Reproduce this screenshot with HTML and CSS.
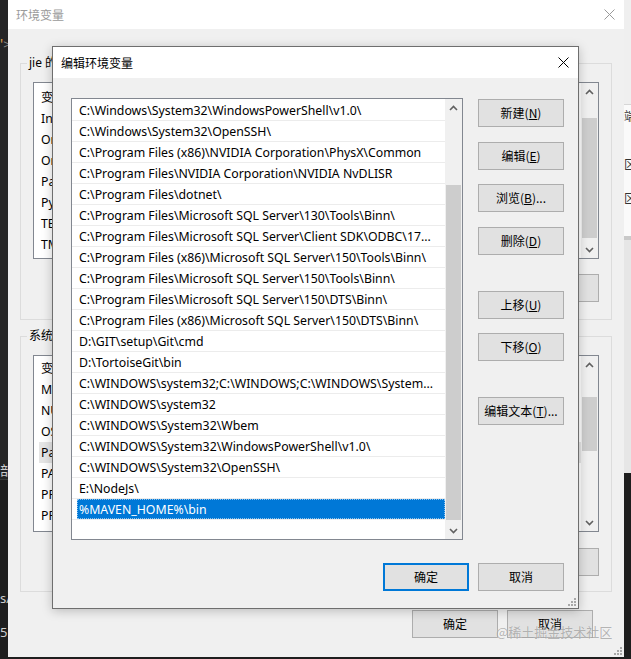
FILE: index.html
```html
<!DOCTYPE html>
<html lang="zh-CN">
<head>
<meta charset="utf-8">
<title>编辑环境变量</title>
<link rel="stylesheet" href="styles.css">
</head>
<body>
<div class="desk">
  <aside class="edge edge-left">
    <div class="el-top"><span class="el-orange">'</span><span class="el-gt">&gt;</span></div>
    <div class="el-mid"></div>
    <div class="el-low"><span class="el-a">部</span><span class="el-b">s/</span><span class="el-c">5p</span></div>
  </aside>

  <section class="win outer">
    <header class="titlebar">
      <span class="title">环境变量</span>
      <span class="close close-inactive"><svg width="11" height="11" viewBox="0 0 11 11"><path d="M0.5 0.5 10.5 10.5 M10.5 0.5 0.5 10.5"/></svg></span>
    </header>
    <div class="outer-body">
      <fieldset class="group group-user">
        <legend>jie 的用户变量(<u>U</u>)</legend>
        <div class="lv">
          <div class="lv-rows lv-rows-user">
            <div class="lv-row">变量</div>
            <div class="lv-row">IntelliJ IDEA</div>
            <div class="lv-row">OneDrive</div>
            <div class="lv-row">OneDriveConsumer</div>
            <div class="lv-row">Path</div>
            <div class="lv-row">PyCharm</div>
            <div class="lv-row">TEMP</div>
            <div class="lv-row">TMP</div>
          </div>
          <div class="sb sb-outer">
            <div class="sb-btn"><svg width="9" height="6" viewBox="0 0 9 6"><path d="M1 5 4.5 1.5 8 5"/></svg></div>
            <div class="sb-track"><div class="sb-thumb th-user"></div></div>
            <div class="sb-btn"><svg width="9" height="6" viewBox="0 0 9 6"><path d="M1 1 4.5 4.5 8 1"/></svg></div>
          </div>
        </div>
        <div class="btns">
          <button class="btn btn-blank" aria-label="删除"></button>
        </div>
      </fieldset>

      <fieldset class="group group-sys">
        <legend>系统变量(<u>S</u>)</legend>
        <div class="lv">
          <div class="lv-rows lv-rows-sys">
            <div class="lv-row">变量</div>
            <div class="lv-row">MAVEN_HOME</div>
            <div class="lv-row">NUMBER_OF_PROCESSORS</div>
            <div class="lv-row">OS</div>
            <div class="lv-row lv-sel">Path</div>
            <div class="lv-row">PATHEXT</div>
            <div class="lv-row">PROCESSOR_ARCHITECTURE</div>
            <div class="lv-row">PROCESSOR_IDENTIFIER</div>
          </div>
          <div class="sb sb-outer">
            <div class="sb-btn"><svg width="9" height="6" viewBox="0 0 9 6"><path d="M1 5 4.5 1.5 8 5"/></svg></div>
            <div class="sb-track"><div class="sb-thumb th-sys"></div></div>
            <div class="sb-btn"><svg width="9" height="6" viewBox="0 0 9 6"><path d="M1 1 4.5 4.5 8 1"/></svg></div>
          </div>
        </div>
        <div class="btns btns-sys">
          <button class="btn btn-blank" aria-label="删除"></button>
        </div>
      </fieldset>

      <div class="outer-foot">
        <button class="btn">确定</button>
        <button class="btn">取消</button>
      </div>
    </div>
    <span class="grip grip-outer"><svg width="10" height="10" viewBox="0 0 10 10"><rect x="8" y="2" width="2" height="2"/><rect x="5" y="5" width="2" height="2"/><rect x="8" y="5" width="2" height="2"/><rect x="2" y="8" width="2" height="2"/><rect x="5" y="8" width="2" height="2"/><rect x="8" y="8" width="2" height="2"/></svg></span>
  </section>

  <aside class="edge edge-right">
    <div class="er-a"></div>
    <div class="er-b"><span class="er-t1">端</span><span class="er-t2">区</span><span class="er-t3">区</span></div>
    <div class="er-c"></div>
    <div class="er-d"></div>
  </aside>

  <section class="win dlg">
    <header class="dlg-title">
      <span class="title">编辑环境变量</span>
      <span class="close"><svg width="11" height="11" viewBox="0 0 11 11"><path d="M0.5 0.5 10.5 10.5 M10.5 0.5 0.5 10.5"/></svg></span>
    </header>
    <div class="dlg-body">
      <div class="plist">
        <div class="plist-rows">
          <div class="prow"><span>C:\Windows\System32\WindowsPowerShell\v1.0\</span></div>
          <div class="prow"><span>C:\Windows\System32\OpenSSH\</span></div>
          <div class="prow"><span>C:\Program Files (x86)\NVIDIA Corporation\PhysX\Common</span></div>
          <div class="prow"><span>C:\Program Files\NVIDIA Corporation\NVIDIA NvDLISR</span></div>
          <div class="prow"><span>C:\Program Files\dotnet\</span></div>
          <div class="prow"><span>C:\Program Files\Microsoft SQL Server\130\Tools\Binn\</span></div>
          <div class="prow"><span>C:\Program Files\Microsoft SQL Server\Client SDK\ODBC\17...</span></div>
          <div class="prow"><span>C:\Program Files (x86)\Microsoft SQL Server\150\Tools\Binn\</span></div>
          <div class="prow"><span>C:\Program Files\Microsoft SQL Server\150\Tools\Binn\</span></div>
          <div class="prow"><span>C:\Program Files\Microsoft SQL Server\150\DTS\Binn\</span></div>
          <div class="prow"><span>C:\Program Files (x86)\Microsoft SQL Server\150\DTS\Binn\</span></div>
          <div class="prow"><span>D:\GIT\setup\Git\cmd</span></div>
          <div class="prow"><span>D:\TortoiseGit\bin</span></div>
          <div class="prow"><span>C:\WINDOWS\system32;C:\WINDOWS;C:\WINDOWS\System...</span></div>
          <div class="prow"><span>C:\WINDOWS\system32</span></div>
          <div class="prow"><span>C:\WINDOWS\System32\Wbem</span></div>
          <div class="prow"><span>C:\WINDOWS\System32\WindowsPowerShell\v1.0\</span></div>
          <div class="prow"><span>C:\WINDOWS\System32\OpenSSH\</span></div>
          <div class="prow"><span>E:\NodeJs\</span></div>
          <div class="prow prow-sel"><span>%MAVEN_HOME%\bin</span></div>
        </div>
        <div class="sb sb-path">
          <div class="sb-btn"><svg width="9" height="6" viewBox="0 0 9 6"><path d="M1 5 4.5 1.5 8 5"/></svg></div>
          <div class="sb-track"><div class="sb-thumb th-path"></div></div>
          <div class="sb-btn"><svg width="9" height="6" viewBox="0 0 9 6"><path d="M1 1 4.5 4.5 8 1"/></svg></div>
        </div>
      </div>
      <div class="side">
        <button class="btn b-new">新建(<u>N</u>)</button>
        <button class="btn b-edit">编辑(<u>E</u>)</button>
        <button class="btn b-browse">浏览(<u>B</u>)...</button>
        <button class="btn b-del">删除(<u>D</u>)</button>
        <button class="btn b-up">上移(<u>U</u>)</button>
        <button class="btn b-down">下移(<u>O</u>)</button>
        <button class="btn b-text">编辑文本(<u>T</u>)...</button>
      </div>
    </div>
    <footer class="dlg-foot">
      <button class="btn btn-default">确定</button>
      <button class="btn">取消</button>
    </footer>
    <span class="grip grip-dlg"><svg width="10" height="10" viewBox="0 0 10 10"><rect x="8" y="2" width="2" height="2"/><rect x="5" y="5" width="2" height="2"/><rect x="8" y="5" width="2" height="2"/><rect x="2" y="8" width="2" height="2"/><rect x="5" y="8" width="2" height="2"/><rect x="8" y="8" width="2" height="2"/></svg></span>
  </section>

  <div class="watermark">@稀土掘金技术社区</div>
</div>
</body>
</html>
```

FILE: styles.css
```css
* { box-sizing: border-box; margin: 0; padding: 0; }
html, body { width: 631px; height: 659px; overflow: hidden; }
body {
  background: #1e1e1e;
  font-family: "Noto Sans", "Noto Sans CJK SC", sans-serif;
  font-size: 12px;
  color: #000;
}
u { text-decoration: underline; text-underline-offset: 1px; }

.desk {
  position: relative;
  width: 631px;
  height: 659px;
  display: flex;
  align-items: flex-start;
}

/* ---------- desktop edges ---------- */
.edge { height: 659px; overflow: hidden; display: flex; flex-direction: column; }
.edge-left { width: 8px; background: #252526; color: #cfcfcf; font-size: 13px; }
.el-top { height: 60px; padding-top: 34px; white-space: nowrap; }
.el-orange { color: #e2a24c; font-size: 14px; }
.el-gt { color: #8a8a8a; }
.el-mid { height: 420px; background: #252526; border-bottom: 1px solid #3a3a3a; }
.el-low { flex: 1; background: #1e1e1e; display: flex; flex-direction: column; white-space: nowrap; }
.el-a { margin-top: -20px; }
.el-b { margin-top: 110px; }
.el-c { margin-top: 16px; }

.edge-right { width: 7px; background: #1e1e1e; color: #333; font-size: 12px; }
.er-a { height: 105px; background: #efefef; border-bottom: 1px solid #d6d6d6; }
.er-b { height: 131px; background: #fafafa; display: flex; flex-direction: column; line-height: 14px; }
.er-t1 { margin-top: 5px; }
.er-t2 { margin-top: 34px; }
.er-t3 { margin-top: 20px; }
.er-c { height: 4px; background: #c9c9c9; }
.er-d { height: 233px; background: #e6e6e6; }

/* ---------- generic ---------- */
.win { flex: none; }
.titlebar, .dlg-title {
  background: #fff;
  display: flex;
  align-items: center;
}
.close { margin-left: auto; width: 30px; display: flex; justify-content: center; align-items: center; }
.close svg path { stroke: #000; stroke-width: 1; fill: none; }
.close-inactive svg path { stroke: #999; }

.btn {
  height: 28px;
  width: 86px;
  background: #e1e1e1;
  border: 1px solid #adadad;
  font-family: "Noto Sans CJK SC", "Noto Sans", sans-serif;
  font-size: 12px;
  color: #000;
  line-height: 1;
}
.btn-default { border: 1px solid #0078d7; box-shadow: inset 0 0 0 1px #0078d7; }

.sb { width: 17px; display: flex; flex-direction: column; background: #f0f0f0; }
.sb-btn { height: 17px; display: flex; align-items: center; justify-content: center; }
.sb-btn svg path { stroke: #606060; stroke-width: 1.6; fill: none; }
.sb-track { flex: 1; padding: 0 1px; }
.sb-thumb { background: #cdcdcd; }
.th-user { margin-top: 18px; height: 120px; }
.th-sys { margin-top: 24px; height: 54px; }
.th-path { margin-top: 69px; height: 335px; }

.grip { position: absolute; line-height: 0; }
.grip svg rect { fill: #a8a8a8; }

/* ---------- outer window ---------- */
.outer {
  position: relative;
  width: 616px;
  height: 657px;
  background: #f0f0f0;
  display: flex;
  flex-direction: column;
}
.outer .titlebar { height: 29px; padding-left: 8px; }
.outer .title { color: #9a9a9a; font-family: "Noto Sans CJK SC", sans-serif; }
.outer-body { padding: 0 12px; display: flex; flex-direction: column; }

.group {
  border: 1px solid #dcdcdc;
  padding: 11px 12px 17px;
  min-width: 0;
}
.group legend {
  font-family: "Noto Sans", "Noto Sans CJK SC", sans-serif;
  font-size: 12px;
  line-height: 16px;
  padding: 0 2px;
  margin-left: -6px;
}
.group-user { margin-top: 26px; }
.group-sys { margin-top: 8px; padding-bottom: 15px; }

.lv {
  height: 177px;
  border: 1px solid #828790;
  background: #fff;
  display: flex;
  overflow: hidden;
}
.lv-rows { flex: 1; overflow: hidden; font-size: 12.3px; }
.lv-rows-user { padding-top: 4px; }
.lv-rows-sys { padding-top: 2px; }
.lv-row { height: 21px; line-height: 21px; white-space: nowrap; margin-left: 5px; padding-left: 2px; }
.lv-sel { background: #e5e5e5; }
.sb-outer { background: #f0f0f0; }

.btns { display: flex; justify-content: flex-end; margin-top: 15px; }
.btns-sys { margin-top: 16px; }

.outer-foot { display: flex; justify-content: flex-end; gap: 9px; margin-top: 18px; padding-right: 19px; }
.grip-outer { right: 2px; bottom: 2px; }

/* ---------- edit dialog ---------- */
.dlg {
  position: absolute;
  left: 52px;
  top: 46px;
  width: 527px;
  height: 563px;
  background: #f0f0f0;
  border: 1px solid #6e6e6e;
  box-shadow: 0 2px 10px rgba(0, 0, 0, 0.22);
  display: flex;
  flex-direction: column;
}
.dlg-title { height: 31px; padding-left: 8px; }
.dlg-title .title { font-family: "Noto Sans CJK SC", sans-serif; font-size: 12px; }

.dlg-body {
  display: grid;
  grid-template-columns: 392px 86px;
  column-gap: 15px;
  padding: 20px 0 0 18px;
}
.plist {
  height: 442px;
  border: 1px solid #828790;
  background: #fff;
  display: flex;
}
.plist-rows { flex: 1; padding-top: 1px; overflow: hidden; }
.prow {
  height: 21px;
  border-bottom: 1px solid #ececec;
  padding-left: 5px;
  font-size: 12.3px;
  white-space: nowrap;
  overflow: hidden;
}
.prow span { display: block; height: 20px; line-height: 22px; padding-left: 2px; overflow: hidden; }
.prow-sel span { background: #0078d7; color: #fff; outline: 1px dotted rgba(255,255,255,0.55); outline-offset: -1px; }
.sb-path { background: #f0f0f0; }

.side { display: flex; flex-direction: column; }
.b-new { margin-top: 1px; }
.b-edit { margin-top: 15px; }
.b-browse { margin-top: 14px; }
.b-del { margin-top: 15px; }
.b-up { margin-top: 36px; }
.b-down { margin-top: 14px; }
.b-text { margin-top: 36px; }

.dlg-foot { display: flex; justify-content: flex-end; gap: 9px; margin-top: 23px; padding-right: 14px; }
.grip-dlg { right: 2px; bottom: 2px; }

.watermark {
  position: absolute;
  left: 496px;
  top: 623px;
  font-family: "Noto Sans CJK SC", sans-serif;
  font-size: 13px;
  line-height: 18px;
  color: rgba(120, 120, 120, 0.55);
  text-shadow: 0 0 1px rgba(255, 255, 255, 0.7);
  white-space: nowrap;
}
```
